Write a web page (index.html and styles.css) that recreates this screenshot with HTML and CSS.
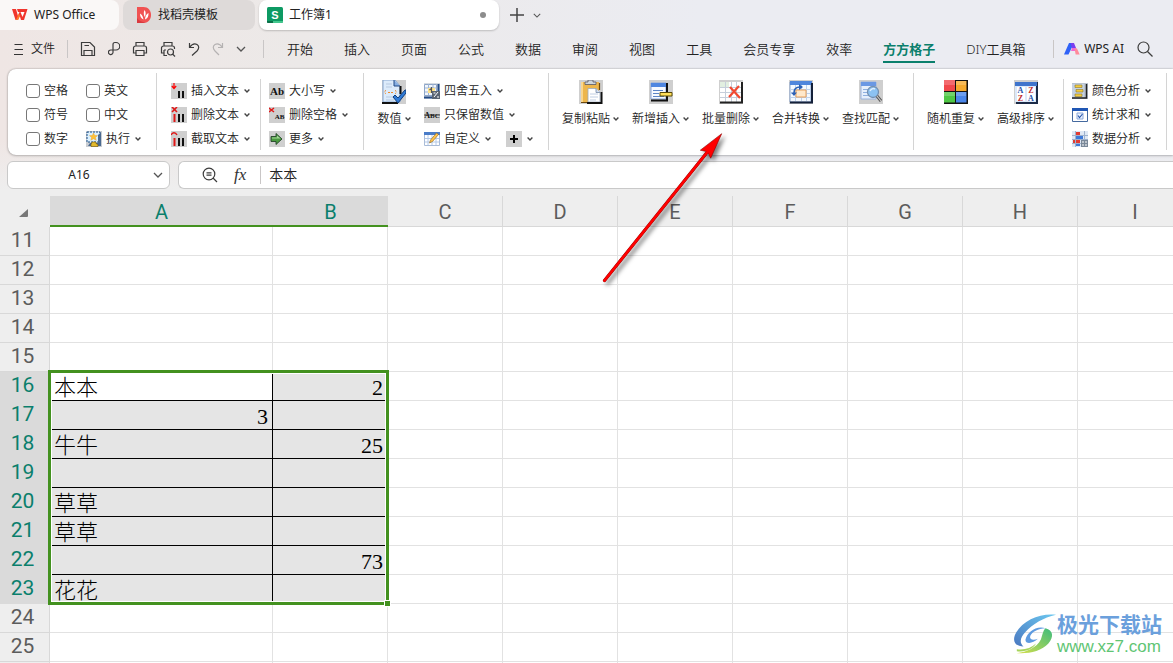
FILE: index.html
```html
<!DOCTYPE html>
<html lang="zh-CN">
<head>
<meta charset="utf-8">
<title>工作簿1 - WPS Office</title>
<link rel="stylesheet" href="styles.css">
</head>
<body>
<svg class="sprite" aria-hidden="true">
  <symbol id="chev" viewBox="0 0 6 6"><path d="M.6 1.6 3 4 5.4 1.6" fill="none" stroke="#444" stroke-width="1.4"/></symbol>
  <symbol id="chev-lg" viewBox="0 0 10 6"><path d="M1 1l4 4 4-4" fill="none" stroke="currentColor" stroke-width="1.3"/></symbol>
</svg>

<header class="tabs">
  <button class="tab tab-home">
    <svg width="16" height="12" viewBox="0 0 16 12"><path d="M0 0h4l2 7 1.500-4H6L5 0h10.500L12 11H9L7.800 7 6 11H3.500z" fill="#f0352c"/><path d="M8.500 3 10.500 8 12.500 3z" fill="#fff"/><path d="M4 11 6.800 4.500 8 7l-2 4z" fill="#ff7a2a"/></svg>
    <span>WPS Office</span>
  </button>
  <button class="tab tab-docer">
    <svg width="14" height="16" viewBox="0 0 14 16"><path d="M0 0h6.500C11 0 14 3.500 14 8s-3 8-8 8H0z" fill="#f05252"/><path d="M0 11c2 3 5 4 9 4.300L6 16H0z" fill="#d93a3f"/><path d="M7.500 3c1.500 2 1.500 4 .3 7C6.500 8 6.500 5 7.500 3zM3 6.500c2 1 3 3 3.500 6C4 11.500 3 9.500 3 6.500zm8.500-.5c.2 3.500-1 5.500-3.500 6.500.2-3 1.300-5.500 3.500-6.500z" fill="#fff"/></svg>
    <span>找稻壳模板</span>
  </button>
  <button class="tab tab-doc">
    <svg width="16" height="16" viewBox="0 0 16 16"><rect width="16" height="16" rx="1.500" fill="#0d9a63"/><path d="M0 14h6v2H1.500A1.500 1.500 0 0 1 0 14z" fill="#0a6f48"/><path d="M6 14h10a2 2 0 0 1-1.500 2H6z" fill="#43c78d"/><text x="8" y="11.500" text-anchor="middle" class="ico-s">S</text></svg>
    <span>工作簿1</span>
    <i class="unsaved"></i>
  </button>
  <button class="plain" aria-label="新建标签"><svg width="14" height="14" viewBox="0 0 14 14"><path d="M7 0v14M0 7h14" stroke="#444" stroke-width="1.500"/></svg></button>
  <button class="plain" aria-label="标签列表"><svg width="8" height="5" class="dim"><use href="#chev-lg"/></svg></button>
</header>

<nav class="menubar">
  <div class="quick">
    <button class="file"><svg width="9" height="12" viewBox="0 0 9 12"><path d="M.5 1.500h8M.5 6.500H9M0 11.500h9" stroke="#333"/></svg>文件</button>
    <i class="vline"></i>
    <button aria-label="保存"><svg width="16" height="16" viewBox="0 0 16 16" class="line"><path d="M1.500 14.500v-13h8.500l4.500 4.500v8.500zM4 14v-4.500h8V14M4.500 4.500h4.500"/></svg></button>
    <button aria-label="输出为PDF"><svg width="12" height="16" viewBox="0 0 12 16" class="line"><path d="M5 11V3.500C5 2.500 5.500 1.500 7 1.500h1a3.500 3.500 0 0 1 0 7.500H3a2.300 2.300 0 1 0 2 2.500V11"/></svg></button>
    <button aria-label="打印"><svg width="16" height="16" viewBox="0 0 16 16" class="line"><path d="M4 5V1.500h8V5M4 12H1.500V7a2 2 0 0 1 2-2h9a2 2 0 0 1 2 2v5H12M4 9.500h8v5H4z"/></svg></button>
    <button aria-label="打印预览"><svg width="16" height="16" viewBox="0 0 16 16" class="line"><path d="M4 5V1.500h8V5M3.500 12H1.500V7a2 2 0 0 1 2-2h9a2 2 0 0 1 2 2v1M4 9h2M4 9v5.500h3"/><circle cx="10.500" cy="11" r="3"/><path d="M12.700 13.200 15 15.500"/></svg></button>
    <button aria-label="撤销"><svg width="12" height="14" viewBox="0 0 12 14" class="line"><path d="M1.500 1v4.500H6M1.500 5.500C4 2 7 1.500 9 2.500c2.500 1.500 2 4.500 0 6.500l-5 4.500"/></svg></button>
    <button aria-label="恢复"><svg width="12" height="14" viewBox="0 0 12 14" class="line faint"><path d="M10.500 1v4.500H6M10.500 5.500C8 2 5 1.500 3 2.500.5 4 1 7 3 9l4 4"/></svg></button>
    <button aria-label="更多"><svg width="10" height="6" class="dim"><use href="#chev-lg"/></svg></button>
    <i class="vline"></i>
  </div>
  <div class="menu">
    <button>开始</button><button>插入</button><button>页面</button><button>公式</button><button>数据</button><button>审阅</button><button>视图</button><button>工具</button><button>会员专享</button><button>效率</button><button class="active">方方格子</button><button>DIY工具箱</button>
  </div>
  <div class="right">
    <i class="vline"></i>
    <button class="ai"><svg width="16" height="12" viewBox="0 0 16 12"><path d="M5 0h5L4.500 11.500H0z" fill="#2f62f7"/><path d="M6.500 0H10l2 5H8z" fill="#7a3ff0"/><path d="M8 5h4l1 2-1 1H7z" fill="#f06ad0"/><path d="M10.500 5.500h2.500l2.700 6h-4z" fill="#ff8a9a"/></svg>WPS AI</button>
    <button aria-label="搜索"><svg width="16" height="16" viewBox="0 0 16 16" class="line"><circle cx="6.500" cy="6.500" r="5.500"/><path d="M10.500 10.500 15.500 15.500"/></svg></button>
  </div>
</nav>

<section class="ribbon">
  <div class="group checks">
    <label><input type="checkbox">空格</label><label><input type="checkbox">英文</label>
    <label><input type="checkbox">符号</label><label><input type="checkbox">中文</label>
    <label><input type="checkbox">数字</label>
    <button class="cmd"><svg width="16" height="16" viewBox="0 0 16 16"><rect width="16" height="16" fill="#c9cdd2"/><path d="M1 1h13v10H1z" fill="#d9efff" stroke="#1b4f86" stroke-dasharray="2 1"/><path d="m7.500 2 1.200 2.600h2.800L9.400 6.500l.8 2.800-2.700-1.600-2.700 1.600.8-2.800-2.100-1.900h2.800z" fill="#ffc23a" stroke="#e8a020" stroke-width=".4"/><path d="M15 1v14H2l2-3h8V4z" fill="#4b6a90"/><path d="M6 11h4v1.500l2 1v2H5v-2z" fill="#e2b92c" stroke="#6d5208" stroke-width=".6"/></svg>执行<svg class="ch"><use href="#chev"/></svg></button>
  </div>
  <i class="sep"></i>
  <div class="group stack text-group">
    <button class="cmd"><svg width="16" height="16" viewBox="0 0 16 16"><path fill="#cfcfcf" d="M0 0h16v16H0z"/><path d="M3 0v5M.8 3 3 5.500 5.200 3" fill="none" stroke="#f00" stroke-width="1.200"/><path d="M7 8h2v7H7zM11 8h2v7h-2z" fill="#111"/></svg>插入文本<svg class="ch"><use href="#chev"/></svg></button>
    <button class="cmd"><svg width="16" height="16" viewBox="0 0 16 16"><path fill="#cfcfcf" d="M0 0h16v16H0z"/><path d="m1 0 5 5M6 0 1 5" stroke="#e01818" stroke-width="1.600"/><path d="M2.500 7h2v8h-2z" fill="#e01818"/><path d="M7 7h2v8H7zM11 7h2v8h-2z" fill="#111"/></svg>删除文本<svg class="ch"><use href="#chev"/></svg></button>
    <button class="cmd"><svg width="16" height="16" viewBox="0 0 16 16"><path fill="#cfcfcf" d="M0 0h16v16H0z"/><path d="M0 4c1.500-3 4.500-3 6 0" fill="none" stroke="#e01818" stroke-width="1.400"/><path d="M2.500 7h2v8h-2z" fill="#e01818"/><path d="M7 7h2v8H7zM11 7h2v8h-2z" fill="#111"/></svg>截取文本<svg class="ch"><use href="#chev"/></svg></button>
  </div>
  <i class="sep short"></i>
  <div class="group stack case-group">
    <button class="cmd"><svg width="16" height="16" viewBox="0 0 16 16"><path fill="#cfcfcf" d="M0 0h16v16H0z"/><text x="8" y="12" text-anchor="middle" class="ico-ab">Ab</text></svg>大小写<svg class="ch"><use href="#chev"/></svg></button>
    <button class="cmd"><svg width="16" height="16" viewBox="0 0 16 16"><path fill="#cfcfcf" d="M0 0h16v16H0z"/><path d="m0 1 5 4M5 1 0 5" stroke="#e01818" stroke-width="1.500"/><text x="10.500" y="12" text-anchor="middle" class="ico-ab tiny">AB</text></svg>删除空格<svg class="ch"><use href="#chev"/></svg></button>
    <button class="cmd"><svg width="16" height="16" viewBox="0 0 16 16"><path fill="#cfcfcf" d="M0 0h16v16H0z"/><path d="M2 5.500h5V2.500l6 5.500-6 5.500V10.500H2z" fill="#4a9a40" stroke="#26452a" stroke-width=".9"/><path d="M3 6.500h5V4.500l3.500 3H3z" fill="#a5d69a"/></svg>更多<svg class="ch"><use href="#chev"/></svg></button>
  </div>
  <i class="sep"></i>
  <div class="group num-group">
    <button class="big narrow"><svg width="24" height="24" viewBox="0 0 24 24"><path fill="#cfcfcf" d="M0 0h24v24H0z"/><path d="M1 0h12l5 6v16H1z" fill="#dcebfb" stroke="#86a6d0"/><path d="M0 23h16M18.500 6v8" stroke="#111" stroke-width="2"/><path d="M12 0v6h6" fill="#86aee2" stroke="#234a86"/><path d="M4 4h6M4 7h6M4 17h9M4 20h8" stroke="#b7c9e0"/><path d="M4 10c-1.500 1-1.500 3 0 4M13 10c1.500 1 1.500 3 0 4M6 12.500h6" fill="none" stroke="#ee8a2c" stroke-dasharray="2 1"/><path d="m11 17 2-2 3 3 7-8h1v3l-8 10z" fill="#2f7bd8" stroke="#123e7c"/></svg><span>数值<svg class="ch"><use href="#chev"/></svg></span></button>
    <div class="stack">
      <button class="cmd"><svg width="16" height="16" viewBox="0 0 16 16"><path fill="#d5dbe2" d="M0 0h16v16H0z"/><path d="M.5 1.500h12v11H.5z" fill="#f2f6fc" stroke="#8ea6c8"/><path d="M4.500 1v11M9 1v11M1 5h12M1 9h12" stroke="#9db4d4"/><path d="M4 5h7v5H4z" fill="#ffe38a"/><path d="M7.500 4v6M7.500 5.500l-2 1.500" stroke="#555" stroke-width="1.200"/><path d="M14.500 1v7M0 14.500h8" stroke="#234a86" stroke-width="2"/><path d="M8 8h8v8H8z" fill="#5a6472"/><path d="m10 14 4-5M9.500 10h2M13 14h2" stroke="#fff"/></svg>四舍五入<svg class="ch"><use href="#chev"/></svg></button>
      <button class="cmd"><svg width="16" height="16" viewBox="0 0 16 16"><path fill="#cfcfcf" d="M0 0h16v16H0z"/><text x="8" y="11" text-anchor="middle" class="ico-abc">A<tspan class="sc">BC</tspan></text><path d="M0 8h16" stroke="#222" stroke-width=".8"/></svg>只保留数值<svg class="ch"><use href="#chev"/></svg></button>
      <div class="pair">
        <button class="cmd"><svg width="16" height="16" viewBox="0 0 16 16"><path d="M.5 1.500h15v13H.5z" fill="#fff" stroke="#a9bcd8"/><path d="M0 1h16v3H0z" fill="#4a7cc8"/><path d="M4 4v10M8 4v10M12 4v10M1 7.500h14M1 11h14" stroke="#b4c9e8"/><path d="m5.500 12 1-3 6-7 2 1.500-6 7z" fill="#ffc24a" stroke="#8b6420" stroke-width=".6"/></svg>自定义<svg class="ch"><use href="#chev"/></svg></button>
        <button class="cmd" aria-label="添加"><svg width="16" height="16" viewBox="0 0 16 16"><path fill="#cfcfcf" d="M0 0h16v16H0z"/><path d="M8 4v8M4 8h8" stroke="#000" stroke-width="2"/></svg><svg class="ch"><use href="#chev"/></svg></button>
      </div>
    </div>
  </div>
  <i class="sep"></i>
  <div class="group bigs tools">
    <button class="big"><svg width="24" height="24" viewBox="0 0 24 24"><path fill="#cfcfcf" d="M0 0h24v24H0z"/><path d="M2 2h18v20H2z" fill="#edb64c"/><path d="M2 2h2v20H2z" fill="#f9d68e"/><path d="M2 22.500h8M20.500 3v7" stroke="#6d4a10" stroke-width="1.200"/><path d="M6 4.500V2h3V0h5v2h3v2.500z" fill="#cfd6da" stroke="#556" stroke-width=".8"/><path d="M9 8.500h8l4 4V22H9z" fill="#fff" stroke="#9aa9bf" stroke-width=".8"/><path d="M17 8.500v4h4" fill="#cfdcf2" stroke="#7488a6" stroke-width=".8"/><path d="M11 14h8M11 17h8M11 20h6" stroke="#c0cee3"/><path d="M8 23h14.500V12" fill="none" stroke="#111" stroke-width="1.800"/></svg><span>复制粘贴<svg class="ch"><use href="#chev"/></svg></span></button>
    <button class="big"><svg width="24" height="24" viewBox="0 0 24 24"><path fill="#cfcfcf" d="M0 0h24v24H0z"/><path d="M2 3h15v16H2z" fill="#f6f9ff" stroke="#8aa6d8"/><path d="M2 3h15v4H2z" fill="#4f86e0"/><path d="M2 20.500h16V3" fill="none" stroke="#111" stroke-width="2"/><path d="M4 10.500h10M4 13.500h6M4 16.500h11" stroke="#5b84c6"/><path d="M11 12.500h12v3.500H11z" fill="#ffdf5a" stroke="#5a4a08"/></svg><span>新增插入<svg class="ch"><use href="#chev"/></svg></span></button>
    <button class="big"><svg width="24" height="24" viewBox="0 0 24 24"><path fill="#cfcfcf" d="M0 0h24v24H0z"/><path d="M1 2h21v20H1z" fill="#fff"/><path d="M1 2h9v6H1z" fill="#e2efe0"/><path d="M6.500 2v20M12.500 2v20M17.500 2v20M1 7.500h21M1 12.500h21M1 17.500h21" stroke="#c6cfdb"/><path d="M23 2v20.500H1" fill="none" stroke="#222" stroke-width="2"/><path d="m11 7 10 11M20 6 10 17" stroke="#f04a32" stroke-width="2.200"/></svg><span>批量删除<svg class="ch"><use href="#chev"/></svg></span></button>
    <button class="big"><svg width="24" height="24" viewBox="0 0 24 24"><path fill="#cfcfcf" d="M0 0h24v24H0z"/><path d="M1 2h21v20H1z" fill="#f4f9ff" stroke="#88a5d0"/><path d="M1 1h22v4H1z" fill="#4f86dc"/><path d="M6.500 5v16M12.500 5v16M17.500 5v16M1 9.500h21M1 13.500h21M1 17.500h21" stroke="#bdd1ec"/><path d="M7 10h10v7H7z" fill="#ffe8cb" stroke="#e8a05a"/><path d="M5 13C5 9 7 7 11 7" fill="none" stroke="#2a5fb4" stroke-width="1.600"/><path d="m2 12.500 3 3.500 3-3.500zM10 4l4 3-4 3z" fill="#2a5fb4"/><path d="M23 3v19.500H1" fill="none" stroke="#14213a" stroke-width="2"/></svg><span>合并转换<svg class="ch"><use href="#chev"/></svg></span></button>
    <button class="big"><svg width="24" height="24" viewBox="0 0 24 24"><path fill="#cfcfcf" d="M0 0h24v24H0z"/><path d="M2 2h15v17H2z" fill="#e6effc" stroke="#9ab3dc"/><path d="M2 2h15v4H2z" fill="#6a98e4"/><path d="M4 9.500h6M4 12.500h5M4 15.500h6" stroke="#8fb0e0"/><circle cx="14" cy="12" r="5.500" fill="#8cc2f2" stroke="#7590b0" stroke-width="1.300"/><path d="M11 11c1-2 3-3 5-2" fill="none" stroke="#dff0ff" stroke-width="1.500"/><path d="m18 16 4 5" stroke="#555" stroke-width="3"/><path d="m18 16 4 5" stroke="#c9c9c9" stroke-width="1.200"/></svg><span>查找匹配<svg class="ch"><use href="#chev"/></svg></span></button>
  </div>
  <i class="sep"></i>
  <div class="group bigs sorting">
    <button class="big"><svg width="24" height="24" viewBox="0 0 24 24"><path fill="#111" d="M0 0h24v24H0z"/><path d="M0 0h11v11H0z" fill="#f0474b"/><path d="M12 1h10.500v10H12z" fill="#f5a92e"/><path d="M0 12h11v10.500H0z" fill="#4fc745"/><path d="M12 12h10.500v10.500H12z" fill="#4a86ea"/><path d="M0 0h11v5H0zM12 1h10v4H12zM0 12h11v4H0zM12 12h10v4H12z" fill="#fff" opacity=".2"/></svg><span>随机重复<svg class="ch"><use href="#chev"/></svg></span></button>
    <button class="big"><svg width="24" height="24" viewBox="0 0 24 24"><path fill="#cfcfcf" d="M0 0h24v24H0z"/><path fill="#1b2b47" d="M2 2h22v22H2z"/><path d="M1 6h21v16H1z" fill="#dce9fa"/><path d="M1 2h22v4H1z" fill="#3f74cc"/><path d="M3 7h8v14H3zM13 7h8v14H13z" fill="#fff"/><text x="6.500" y="13" text-anchor="middle" class="ico-az blue">A</text><text x="6.500" y="20.500" text-anchor="middle" class="ico-az red">Z</text><text x="17" y="13" text-anchor="middle" class="ico-az red">Z</text><text x="17" y="20.500" text-anchor="middle" class="ico-az blue">A</text></svg><span>高级排序<svg class="ch"><use href="#chev"/></svg></span></button>
  </div>
  <i class="sep short"></i>
  <div class="group stack stats-group">
    <button class="cmd"><svg width="16" height="16" viewBox="0 0 16 16"><path fill="#b9c3d0" d="M0 0h16v16H0z"/><path d="M0 1h12v14H0z" fill="#c5d2e3"/><path d="M14.500 1v14H0" fill="none" stroke="#222" stroke-width="1.500"/><path d="M3 2h7v2.500H3zM4 6.500h7V9H4zM3 11h7v2.500H3z" fill="#f4cc3c" stroke="#8d7a2c" stroke-width=".6"/></svg>颜色分析<svg class="ch"><use href="#chev"/></svg></button>
    <button class="cmd"><svg width="16" height="16" viewBox="0 0 16 16"><path d="M0 1h16v14H0z" fill="#fff"/><path d="M0 1h16v3H0z" fill="#1f56b4"/><path d="M.5 4v10.500h15V4" fill="none" stroke="#44699f"/><path d="M5 6h6v6H5z" fill="#e9f2ff" stroke="#8ca8da"/><path d="m6 8.500 1.500 2L10.500 7" fill="none" stroke="#2453a8" stroke-width="1.100"/></svg>统计求和<svg class="ch"><use href="#chev"/></svg></button>
    <button class="cmd"><svg width="16" height="16" viewBox="0 0 16 16"><path fill="#dfe8f4" d="M0 0h16v16H0z"/><path d="M0 4.500h16M0 8.500h16M0 12.500h16M3.500 0v16M12.500 0v16" stroke="#9fb2cd"/><path d="M4 1h4v3H4zM4 9h4v3H4z" fill="#e23b32"/><path d="M4 5h7v3H4z" fill="#3d79d8"/><path d="M1 9h2v3H1z" fill="#e23b32"/><path d="M4 13h4v2H4z" fill="#3d79d8"/><path d="M9 9h7v7H9z" fill="#7a8898"/><path d="M10 11h2M13 11h2M10 14h2M13 14h2" stroke="#fff"/></svg>数据分析<svg class="ch"><use href="#chev"/></svg></button>
  </div>
  <i class="sep"></i>
</section>

<section class="formula-row">
  <div class="name-box"><input type="text" value="A16" aria-label="名称框"><button class="plain" aria-label="选择区域"><svg width="10" height="6" class="dim"><use href="#chev-lg"/></svg></button></div>
  <div class="formula">
    <button class="plain" aria-label="缩小"><svg width="16" height="16" viewBox="0 0 16 16" class="line"><circle cx="7" cy="7" r="5.800"/><path d="M4.500 5.800h5M4.500 8.200h5M11 11l4 4"/></svg></button>
    <button class="plain fx" aria-label="插入函数">fx</button>
    <i class="vline"></i>
    <input type="text" value="本本" aria-label="编辑栏">
  </div>
</section>

<main class="sheet">
  <table>
    <colgroup><col class="c-head"><col class="c-a"><col class="c"><col class="c"><col class="c"><col class="c"><col class="c"><col class="c"><col class="c"><col class="c"></colgroup>
    <thead><tr><th class="corner"><svg width="9" height="9" viewBox="0 0 9 9"><path d="M9 1v7a1 1 0 0 1-1 1H0z" fill="#777"/></svg></th><th class="on">A</th><th class="on">B</th><th>C</th><th>D</th><th>E</th><th>F</th><th>G</th><th>H</th><th>I</th></tr></thead>
    <tbody>
      <tr><th>11</th><td></td><td></td><td></td><td></td><td></td><td></td><td></td><td></td><td></td></tr>
      <tr><th>12</th><td></td><td></td><td></td><td></td><td></td><td></td><td></td><td></td><td></td></tr>
      <tr><th>13</th><td></td><td></td><td></td><td></td><td></td><td></td><td></td><td></td><td></td></tr>
      <tr><th>14</th><td></td><td></td><td></td><td></td><td></td><td></td><td></td><td></td><td></td></tr>
      <tr><th>15</th><td></td><td></td><td></td><td></td><td></td><td></td><td></td><td></td><td></td></tr>
      <tr class="sel"><th>16</th><td class="current">本本</td><td class="num">2</td><td></td><td></td><td></td><td></td><td></td><td></td><td></td></tr>
      <tr class="sel"><th>17</th><td class="num">3</td><td></td><td></td><td></td><td></td><td></td><td></td><td></td><td></td></tr>
      <tr class="sel"><th>18</th><td>牛牛</td><td class="num">25</td><td></td><td></td><td></td><td></td><td></td><td></td><td></td></tr>
      <tr class="sel"><th>19</th><td></td><td></td><td></td><td></td><td></td><td></td><td></td><td></td><td></td></tr>
      <tr class="sel"><th>20</th><td>草草</td><td></td><td></td><td></td><td></td><td></td><td></td><td></td><td></td></tr>
      <tr class="sel"><th>21</th><td>草草</td><td></td><td></td><td></td><td></td><td></td><td></td><td></td><td></td></tr>
      <tr class="sel"><th>22</th><td></td><td class="num">73</td><td></td><td></td><td></td><td></td><td></td><td></td><td></td></tr>
      <tr class="sel"><th>23</th><td>花花</td><td></td><td></td><td></td><td></td><td></td><td></td><td></td><td></td></tr>
      <tr><th>24</th><td></td><td></td><td></td><td></td><td></td><td></td><td></td><td></td><td></td></tr>
      <tr><th>25</th><td></td><td></td><td></td><td></td><td></td><td></td><td></td><td></td><td></td></tr>
      <tr><th></th><td></td><td></td><td></td><td></td><td></td><td></td><td></td><td></td><td></td></tr>
    </tbody>
  </table>
  <div class="selection"><i class="handle"></i></div>
  <div class="brand">
    <svg width="44" height="42" viewBox="0 0 46 42">
      <defs><linearGradient id="g1" x1="0" y1="1" x2="1" y2="0"><stop offset="0" stop-color="#4a78c0"/><stop offset="1" stop-color="#6cc8f0"/></linearGradient><linearGradient id="g2" x1="0" y1="1" x2="1" y2="0"><stop offset="0" stop-color="#d8e04a"/><stop offset="1" stop-color="#3dbb7c"/></linearGradient></defs>
      <path d="M45 1C28-1 9 7 2 22c-3 8 2 12 9 12-5-4-3-10 2-15C20 11 32 4 45 1z" fill="url(#g1)"/>
      <path d="M13 27C15 19 24 12 34 15c-8 0-14 4-16 8-1 4 3 5 8 3-5 5-13 6-13 1z" fill="#5e9be0"/>
      <path d="M34 15c8 2 9 9 3 16C30 39 16 42 4 41c10-1 21-6 25-14 2-5 2-9 5-12z" fill="url(#g2)"/>
      <path d="M4 37c8 1 15-1 20-6-3 6-11 9-20 8z" fill="#a5d45a"/>
    </svg>
    <div><strong>极光下载站</strong><span>www.xz7.com</span></div>
  </div>
</main>

<svg class="pointer" width="126" height="158" viewBox="598 130 126 158" aria-hidden="true">
  <path d="M604.500 280.500 709 150" stroke="#8a0000" stroke-width="3.200" stroke-linecap="round"/>
  <path d="M721.700 133.700 700.300 150.200 707.500 151.800 710.700 158.200z" fill="#f00" stroke="#8a0000" stroke-width=".6"/>
  <path d="M604.500 280.500 709 150" stroke="#f00" stroke-width="2.600" stroke-linecap="round"/>
</svg>
</body>
</html>
```

FILE: styles.css
```css
* { box-sizing: border-box; }

body {
  margin: 0;
  height: 100vh;
  display: flex;
  flex-direction: column;
  overflow: hidden;
  position: relative;
  background: linear-gradient(180deg, rgba(238, 238, 238, 0) 140px, #eee 190px), linear-gradient(90deg, #efe6e4 0, #ece9e8 300px, #ebecf2 700px);
  color: #222;
  font: 12px/16px "Noto Sans", "Noto Sans CJK SC", sans-serif;
}

button, input {
  font: inherit;
  color: inherit;
  border: 0;
  padding: 0;
  margin: 0;
  background: none;
  outline: 0;
}

button { display: flex; align-items: center; white-space: nowrap; }
svg { display: block; flex: none; }
.sprite { position: absolute; width: 0; height: 0; }
.line { fill: none; stroke: #3c3c3c; stroke-width: 1.2; }
.line.faint { stroke: #b5b2b2; }
.dim { color: #555; }
.vline { width: 1px; height: 18px; background: #c9c6c6; flex: none; }

/* Document tabs */
.tabs { display: flex; height: 30px; flex: none; }
.tab { height: 30px; border-radius: 8px; }
.tab-home { width: 119px; padding-left: 12px; gap: 6px; background: #faf8f7; border-radius: 0 8px 8px 0; }
.tab-docer { width: 132px; margin-left: 4px; padding-left: 14px; gap: 7px; background: #dedad9; }
.tab-doc { width: 240px; margin: 0 11px 0 4px; padding: 0 13px 0 8px; gap: 6px; background: #fff; box-shadow: 0 1px 2px rgba(0, 0, 0, .2); }
.unsaved { width: 6px; height: 6px; border-radius: 50%; background: #8c8c8c; margin-left: auto; }
.tabs .plain { margin-right: 9px; }
.ico-s { font: bold 11px "Liberation Sans", sans-serif; fill: #fff; }

/* Menu bar */
.menubar { display: flex; align-items: center; height: 38px; flex: none; font-weight: 350; }
.quick { display: flex; align-items: center; gap: 12px; padding-left: 14px; }
.quick .file { gap: 8px; }
.quick .vline:last-child { margin-left: 5px; }
.menu { display: flex; gap: 31px; margin-left: 23px; font-size: 13px; }
.menu button { height: 27px; border-bottom: 2px solid transparent; padding-top: 2px; }
.menu .active { color: #0a7f6c; font-weight: 700; border-color: #0a7f6c; }
.right { display: flex; align-items: center; gap: 10px; margin-left: auto; padding-right: 20px; }
.right .ai { gap: 4px; margin-right: 3px; font-weight: 400; }

/* Ribbon */
.ribbon {
  display: flex;
  flex: none;
  height: 86px;
  margin: 1px 0 0 8px;
  padding: 4px 0;
  background: #fff;
  border-radius: 8px 0 0 8px;
  box-shadow: 0 0 2px rgba(0, 0, 0, .35), 0 1px 3px rgba(0, 0, 0, .15);
  font-weight: 350;
}
.sep { width: 1px; height: 77px; background: #d4d4d4; flex: none; }
.sep.short { height: 71px; margin-top: 6px; }
.group { flex: none; padding-top: 6px; }
.stack { display: grid; grid-auto-rows: 24px; align-content: start; }
.checks { display: grid; grid-template: repeat(3, 24px) / 60px 70px; padding-left: 18px; }
.checks label { display: flex; align-items: center; gap: 4px; }
.checks input { appearance: none; width: 14px; height: 14px; border: 1px solid #777; border-radius: 3px; background: #fff; }
.cmd { gap: 4px; }
.ch { width: 6px; height: 6px; margin-left: 1px; }
.text-group { padding-left: 14px; width: 103px; }
.case-group { padding-left: 8px; width: 102px; }
.stats-group { padding-left: 8px; width: 102px; }
.num-group { display: flex; width: 184px; padding-left: 13px; gap: 13px; }
.pair { display: flex; gap: 15px; }
.big { flex-direction: column; width: 57px; height: 50px; padding-top: 1px; gap: 7px; }
.big span { display: flex; align-items: center; gap: 2px; }
.big.narrow { width: 34px; }
.bigs { display: flex; gap: 13px; padding-left: 13px; }
.tools { padding-right: 14px; }
.sorting { padding-right: 9px; }
.ico-ab { font: bold 11px "Liberation Serif", serif; fill: #111; }
.ico-ab.tiny { font-size: 7px; }
.ico-abc { font: bold 8px "Liberation Serif", serif; fill: #111; }
.sc { font-size: 7px; }
.ico-az { font: bold 8px "Liberation Serif", serif; }
.blue { fill: #2450a8; }
.red { fill: #c02a2a; }

/* Name box and formula bar */
.formula-row { display: flex; gap: 8px; flex: none; padding: 6px 0 7px 7px; }
.name-box, .formula { display: flex; align-items: center; height: 28px; background: #fff; border: 1px solid #c9c9c9; border-radius: 6px; }
.name-box { width: 163px; padding-right: 6px; }
.name-box input { flex: 1; min-width: 0; text-align: center; padding-right: 3px; }
.formula { flex: 1; border-right: 0; border-radius: 6px 0 0 6px; padding-left: 23px; gap: 14px; }
.formula .fx { font: italic 17px "Liberation Serif", serif; color: #333; margin-left: 2px; }
.formula input { flex: 1; min-width: 0; margin-left: -6px; font-size: 14px; font-weight: 350; }

/* Worksheet */
.sheet { position: relative; flex: 1; min-height: 0; overflow: hidden; background: #fff; }
.sheet table { width: 1193px; table-layout: fixed; border-collapse: separate; border-spacing: 0; }
.c-head { width: 50px; }
.c-a { width: 223px; }
.c { width: 115px; }
.sheet th { background: #eee; color: #5c5c5c; font: 400 20px/24px Roboto, sans-serif; padding: 0; border-right: 1px solid #d8d8d8; border-bottom: 1px solid #d8d8d8; }
.sheet thead th { height: 31px; padding-top: 2px; }
.sheet thead .on { background: #dadada; color: #0a7f6c; border-right: 0; border-bottom: 2px solid #43911f; }
.sheet thead .corner { border: 0; padding-left: 19px; }
.sheet tbody th { height: 29px; font-size: 21px; padding: 0 4px 2px 0; }
.sheet td { height: 29px; padding: 3px 4px 0 4px; border-right: 1px solid #e2e2e2; border-bottom: 1px solid #e2e2e2; color: #000; font: 300 22px/24px "Liberation Serif", "Noto Sans CJK SC", serif; white-space: nowrap; }
.sheet .sel th { background: #dadada; color: #0a7f6c; border-bottom-color: #dadada; }
.sheet .sel td:nth-child(-n+3) { background: #e5e5e5; border-color: #000; }
.sheet .sel td.current { background: #fff; }
.sheet td.num { text-align: right; }

.selection { position: absolute; left: 48px; top: 174px; width: 341px; height: 235px; border: 3px solid #43911f; box-shadow: inset 0 0 0 1px #fff; }
.handle { position: absolute; right: -5px; bottom: -5px; width: 7px; height: 7px; background: #43911f; border: 1px solid #fff; }

.brand { position: absolute; right: 11px; bottom: 7px; display: flex; align-items: center; }
.brand div { display: flex; flex-direction: column; }
.brand strong { font-size: 21px; line-height: 25px; color: #6ba0dc; }
.brand span { font: 17px/19px "Liberation Sans", sans-serif; color: #5fc574; }

.pointer { position: absolute; left: 598px; top: 130px; filter: drop-shadow(3px 3px 2px rgba(0, 0, 0, .5)); }
```
